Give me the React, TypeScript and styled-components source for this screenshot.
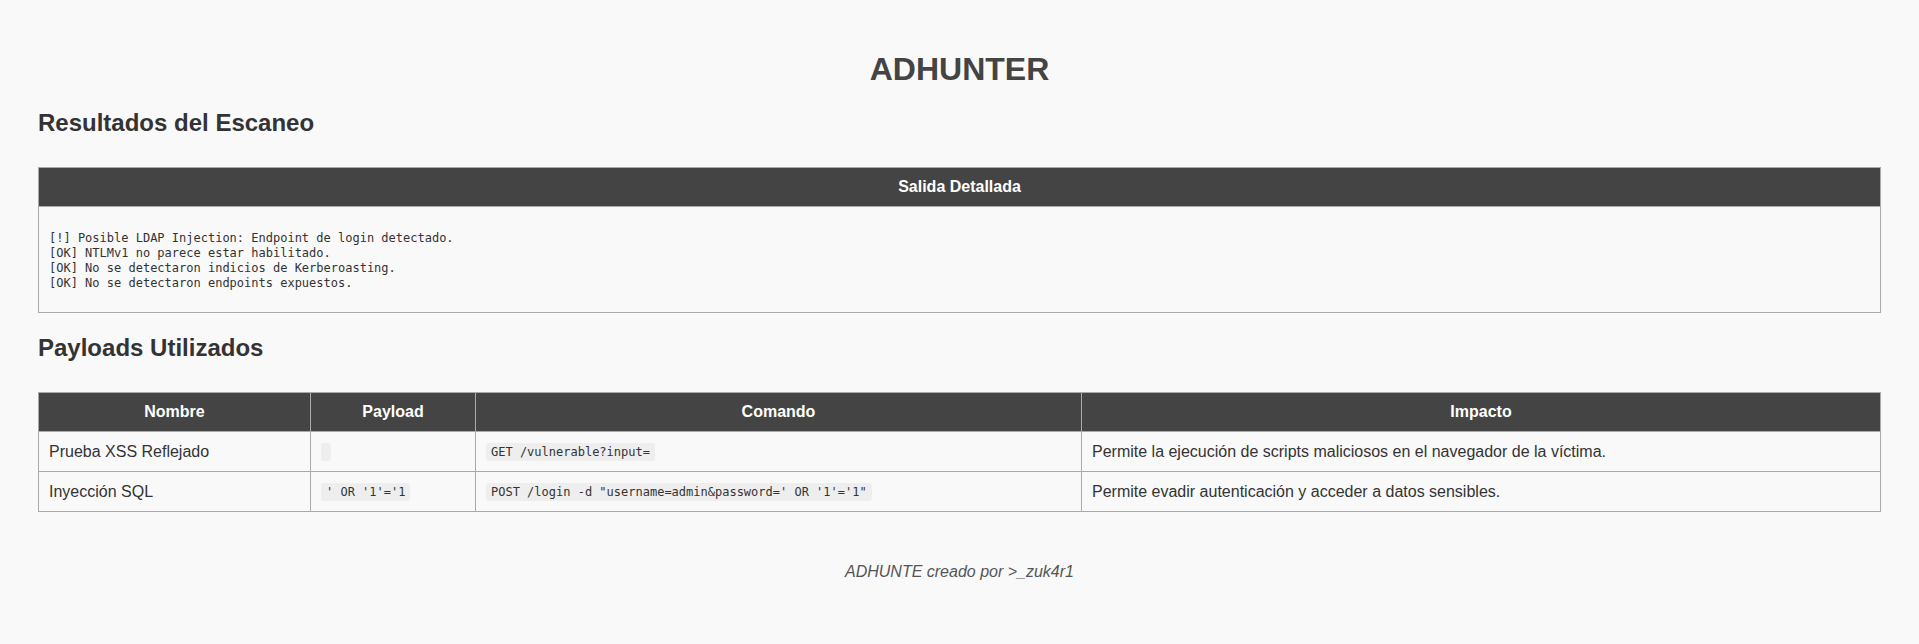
import React from "react";
import styled, { createGlobalStyle } from "styled-components";

const GlobalStyle = createGlobalStyle`
  html, body {
    margin: 0;
    padding: 0;
    background: #f9f9f9;
  }
  body {
    font-family: "Liberation Sans", Arial, sans-serif;
    color: #333;
  }
`;

const Page = styled.div`
  display: flex;
  flex-direction: column;
  padding: 51px 38px 60px;
`;

const Title = styled.h1`
  margin: 0 0 21px;
  font-size: 32px;
  line-height: 37px;
  font-weight: bold;
  color: #444;
  text-align: center;
`;

const SectionTitle = styled.h2<{ $top?: number }>`
  margin: ${(p) => p.$top ?? 0}px 0 30px;
  font-size: 24px;
  line-height: 28px;
  font-weight: bold;
  color: #333;
`;

const Table = styled.table`
  width: 100%;
  border-collapse: collapse;
  table-layout: fixed;
  border: 1px solid #aaa;
`;

const HeadCell = styled.th<{ $width?: number }>`
  ${(p) => (p.$width ? `width: ${p.$width}px;` : "")}
  background: #444;
  color: #fff;
  font-size: 16px;
  line-height: 18px;
  font-weight: bold;
  text-align: center;
  padding: 10px;
  border: 1px solid #aaa;
`;

const Cell = styled.td`
  padding: 10px;
  font-size: 16px;
  line-height: 19px;
  color: #333;
  text-align: left;
  vertical-align: middle;
  border: 1px solid #aaa;
`;

const Output = styled.pre`
  margin: 14px 0 11px;
  font-family: "DejaVu Sans Mono", monospace;
  font-size: 12px;
  line-height: 15px;
  color: #333;
  white-space: pre-wrap;
`;

const Code = styled.code`
  display: inline-block;
  vertical-align: top;
  margin-top: 0.5px;
  font-family: "DejaVu Sans Mono", monospace;
  font-size: 12px;
  line-height: 14px;
  min-height: 14px;
  padding: 2px 5px;
  background: #eee;
  border-radius: 3px;
  color: #333;
  white-space: pre;
`;

const Footer = styled.footer`
  margin-top: 50px;
  text-align: center;
  font-style: italic;
  font-size: 16px;
  line-height: 19px;
  color: #555;
`;

const scanLines = [
  "[!] Posible LDAP Injection: Endpoint de login detectado.",
  "[OK] NTLMv1 no parece estar habilitado.",
  "[OK] No se detectaron indicios de Kerberoasting.",
  "[OK] No se detectaron endpoints expuestos.",
];

const payloads = [
  {
    nombre: "Prueba XSS Reflejado",
    payload: "",
    comando: "GET /vulnerable?input=",
    impacto: "Permite la ejecución de scripts maliciosos en el navegador de la víctima.",
  },
  {
    nombre: "Inyección SQL",
    payload: "' OR '1'='1",
    comando: "POST /login -d \"username=admin&password=' OR '1'='1\"",
    impacto: "Permite evadir autenticación y acceder a datos sensibles.",
  },
];

export default function App() {
  return (
    <>
      <GlobalStyle />
      <Page>
        <Title>ADHUNTER</Title>
        <SectionTitle>Resultados del Escaneo</SectionTitle>
        <Table>
          <thead>
            <tr>
              <HeadCell>Salida Detallada</HeadCell>
            </tr>
          </thead>
          <tbody>
            <tr>
              <Cell>
                <Output>{scanLines.join("\n")}</Output>
              </Cell>
            </tr>
          </tbody>
        </Table>
        <SectionTitle $top={21}>Payloads Utilizados</SectionTitle>
        <Table>
          <thead>
            <tr>
              <HeadCell $width={251}>Nombre</HeadCell>
              <HeadCell $width={144}>Payload</HeadCell>
              <HeadCell $width={585}>Comando</HeadCell>
              <HeadCell>Impacto</HeadCell>
            </tr>
          </thead>
          <tbody>
            {payloads.map((p) => (
              <tr key={p.nombre}>
                <Cell>{p.nombre}</Cell>
                <Cell>
                  <Code>{p.payload}</Code>
                </Cell>
                <Cell>
                  <Code>{p.comando}</Code>
                </Cell>
                <Cell>{p.impacto}</Cell>
              </tr>
            ))}
          </tbody>
        </Table>
        <Footer>ADHUNTE creado por &gt;_zuk4r1</Footer>
      </Page>
    </>
  );
}
